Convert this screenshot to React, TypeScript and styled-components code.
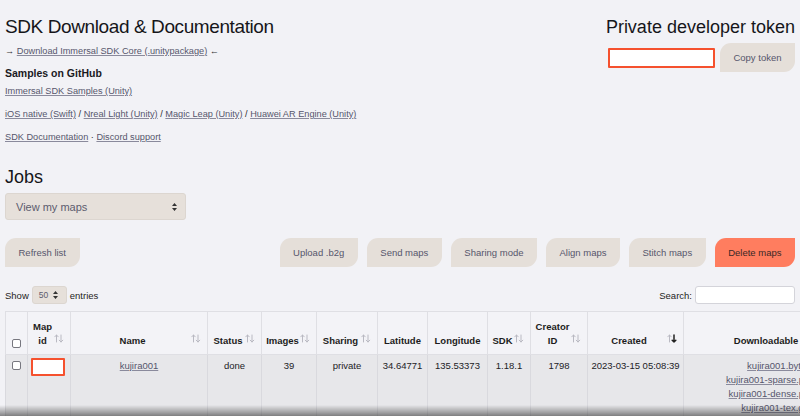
import React from "react";
import styled, { createGlobalStyle } from "styled-components";

const Global = createGlobalStyle`
  html, body { margin: 0; padding: 0; overflow: hidden; background: #f2f2f6; }
  body { font-family: "Liberation Sans", Arial, Helvetica, sans-serif; color: #1e1e22; }
  * { box-sizing: border-box; }
`;

const Page = styled.div`
  padding: 16px 5px 0 5px;
  width: 800px;
  position: relative;
`;

const Top = styled.div`
  display: flex;
  justify-content: space-between;
  align-items: flex-start;
`;

const LeftCol = styled.div`
  display: flex;
  flex-direction: column;
`;

const RightCol = styled.div`
  display: flex;
  flex-direction: column;
  align-items: flex-end;
`;

const Title = styled.h1<{ $size?: number }>`
  margin: 0;
  font-weight: 400;
  font-size: ${(p) => p.$size ?? 19}px;
  line-height: 22px;
  letter-spacing: ${(p) => (p.$size ? 0 : -0.4)}px;
  color: #16161a;
`;

const Line = styled.div<{ $mt: number }>`
  margin-top: ${(p) => p.$mt}px;
  height: 14px;
  font-size: 9.2px;
  line-height: 14px;
  color: #2a2a30;
`;

const Arrow = styled.span`
  font-weight: 700;
  color: #333;
`;

const SubHead = styled.h2`
  margin: 7px 0 0 0;
  font-size: 10.5px;
  line-height: 16px;
  font-weight: 700;
  color: #1a1a1e;
`;

const A = styled.a`
  color: #56566c;
  text-decoration: underline;
  text-decoration-color: #8a8a9c;
  cursor: pointer;
`;

const TokenRow = styled.div`
  display: flex;
  align-items: center;
  gap: 5px;
  margin-top: 5px;
`;

const TokenInput = styled.div`
  width: 107px;
  height: 20px;
  background: #fff;
  border: 2px solid #f5512e;
  border-radius: 1px;
`;

const Button = styled.button<{ $danger?: boolean }>`
  height: 29px;
  padding: 0 13.5px;
  border: none;
  border-radius: 11px 0 11px 0;
  background: ${(p) => (p.$danger ? "#ff7d5f" : "#e5dfd9")};
  color: ${(p) => (p.$danger ? "#3a2826" : "#56566c")};
  font-family: inherit;
  font-size: 9.5px;
  cursor: pointer;
  white-space: nowrap;
`;

const JobsTitle = styled(Title)`
  margin-top: 22px;
`;

const Select = styled.div<{ $w: number; $h: number; $fs: number; $pl: number }>`
  width: ${(p) => p.$w}px;
  height: ${(p) => p.$h}px;
  background: #e6e0da;
  border: 1px solid #dcd6d0;
  border-radius: 3px;
  display: flex;
  align-items: center;
  justify-content: space-between;
  padding: 0 8px 0 ${(p) => p.$pl}px;
  font-size: ${(p) => p.$fs}px;
  color: #5c5c6e;
`;

const JobsSelect = styled(Select)`
  margin-top: 5px;
`;

const ButtonRow = styled.div`
  display: flex;
  align-items: center;
  margin-top: 18px;
`;

const ButtonGroup = styled.div`
  display: flex;
  gap: 9px;
  margin-left: auto;
`;

const Controls = styled.div`
  display: flex;
  align-items: center;
  justify-content: space-between;
  margin-top: 19px;
  font-size: 9.5px;
  color: #1e1e22;
`;

const Inline = styled.div`
  display: flex;
  align-items: center;
  gap: 3px;
`;

const SearchInput = styled.div`
  width: 100px;
  height: 18px;
  background: #fff;
  border: 1px solid #d4d4da;
  border-radius: 3px;
`;

const Table = styled.table`
  margin-top: 7px;
  border-collapse: collapse;
  table-layout: fixed;
  width: 810px;
  font-size: 9.5px;
`;

const Th = styled.th<{ $sortable?: boolean; $pl?: number }>`
  position: relative;
  border: 1px solid #dfdfe4;
  background: #f3f3f7;
  vertical-align: bottom;
  padding: 8px ${(p) => (p.$sortable ? 16 : 3)}px 6px ${(p) => p.$pl ?? 3}px;
  line-height: 14px;
  font-weight: 700;
  color: #1c1c20;
  text-align: center;
  white-space: nowrap;
`;

const Td = styled.td<{ $align?: string }>`
  border: 1px solid #d9d9de;
  background: #e7e7ea;
  vertical-align: top;
  padding: 4px 2px 40px 2px;
  line-height: 14px;
  color: #222226;
  white-space: nowrap;
  text-align: ${(p) => p.$align ?? "center"};
`;

const SortWrap = styled.span`
  position: absolute;
  right: 6px;
  bottom: 11px;
  display: flex;
`;

const Check = styled.span`
  display: inline-block;
  width: 9px;
  height: 9px;
  border: 1px solid #77777f;
  border-radius: 2px;
  background: #fff;
`;

const CheckCell = styled.div<{ $top: number }>`
  display: flex;
  justify-content: center;
  padding-top: ${(p) => p.$top}px;
`;

const IdInput = styled.div`
  width: 34px;
  height: 18px;
  background: #fff;
  border: 2px solid #f5512e;
  border-radius: 1px;
  margin: -1px 0 0 1px;
`;

const LinkList = styled.div`
  display: flex;
  flex-direction: column;
  align-items: flex-end;
  padding-right: 2px;
`;

const BottomShade = styled.div`
  position: fixed;
  left: 0;
  right: 0;
  bottom: 0;
  height: 11px;
  background: linear-gradient(to bottom, rgba(0,0,0,0), rgba(40,40,40,0.55));
  pointer-events: none;
`;

const SortIcon = ({ active }: { active?: boolean }) => (
  <svg width="10" height="9" viewBox="0 0 10 9">
    <g fill="none" strokeLinecap="round" strokeLinejoin="round">
      <path d="M2.5 8V1M0.8 2.8L2.5 1L4.2 2.8" stroke="#b9b9c2" strokeWidth="1" />
      <path
        d="M7 1V8M5.2 6.2L7 8L8.8 6.2"
        stroke={active ? "#222" : "#b9b9c2"}
        strokeWidth={active ? 1.5 : 1}
      />
    </g>
  </svg>
);

const UpDown = () => (
  <svg width="5" height="8" viewBox="0 0 5 8">
    <path d="M2.5 0L5 3H0Z M2.5 8L0 5H5Z" fill="#333" />
  </svg>
);

type Col = { label: React.ReactNode; w: number; sort?: boolean; active?: boolean; pl?: number };

const cols: Col[] = [
  { label: "", w: 22 },
  { label: <>Map<br />id</>, w: 43, sort: true },
  { label: "Name", w: 137, sort: true },
  { label: "Status", w: 54, sort: true },
  { label: "Images", w: 55, sort: true },
  { label: "Sharing", w: 61, sort: true },
  { label: "Latitude", w: 50 },
  { label: "Longitude", w: 60 },
  { label: "SDK", w: 43, sort: true },
  { label: <>Creator<br />ID</>, w: 57, sort: true },
  { label: "Created", w: 96, sort: true, active: true },
  { label: "Downloadable", w: 132, pl: 36 },
];

const files = [
  "kujira001.bytes",
  "kujira001-sparse.ply",
  "kujira001-dense.ply",
  "kujira001-tex.glb",
  "kujira001-tex.obj",
];

export default function App() {
  return (
    <>
      <Global />
      <Page>
        <Top>
          <LeftCol>
            <Title>SDK Download &amp; Documentation</Title>
            <Line $mt={6}>
              <Arrow>→</Arrow> <A>Download Immersal SDK Core (.unitypackage)</A> <Arrow>←</Arrow>
            </Line>
            <SubHead>Samples on GitHub</SubHead>
            <Line $mt={3}>
              <A>Immersal SDK Samples (Unity)</A>
            </Line>
            <Line $mt={9}>
              <A>iOS native (Swift)</A> / <A>Nreal Light (Unity)</A> /{" "}
              <A>Magic Leap (Unity)</A> / <A>Huawei AR Engine (Unity)</A>
            </Line>
            <Line $mt={9}>
              <A>SDK Documentation</A> · <A>Discord support</A>
            </Line>
          </LeftCol>
          <RightCol>
            <Title $size={18}>Private developer token</Title>
            <TokenRow>
              <TokenInput />
              <Button>Copy token</Button>
            </TokenRow>
          </RightCol>
        </Top>

        <JobsTitle $size={18}>Jobs</JobsTitle>
        <JobsSelect $w={181} $h={27} $fs={11} $pl={10}>
          <span>View my maps</span>
          <UpDown />
        </JobsSelect>

        <ButtonRow>
          <Button>Refresh list</Button>
          <ButtonGroup>
            <Button>Upload .b2g</Button>
            <Button>Send maps</Button>
            <Button>Sharing mode</Button>
            <Button>Align maps</Button>
            <Button>Stitch maps</Button>
            <Button $danger>Delete maps</Button>
          </ButtonGroup>
        </ButtonRow>

        <Controls>
          <Inline>
            <span>Show</span>
            <Select $w={35} $h={18} $fs={8.5} $pl={6}>
              <span>50</span>
              <UpDown />
            </Select>
            <span>entries</span>
          </Inline>
          <Inline>
            <span>Search:</span>
            <SearchInput />
          </Inline>
        </Controls>

        <Table>
          <colgroup>
            {cols.map((c, i) => (
              <col key={i} style={{ width: c.w }} />
            ))}
          </colgroup>
          <thead>
            <tr>
              {cols.map((c, i) => (
                <Th key={i} $sortable={c.sort} $pl={c.pl}>
                  {i === 0 ? (
                    <CheckCell $top={0}>
                      <Check />
                    </CheckCell>
                  ) : (
                    c.label
                  )}
                  {c.sort && (
                    <SortWrap>
                      <SortIcon active={c.active} />
                    </SortWrap>
                  )}
                </Th>
              ))}
            </tr>
          </thead>
          <tbody>
            <tr>
              <Td>
                <CheckCell $top={2}>
                  <Check />
                </CheckCell>
              </Td>
              <Td $align="left">
                <IdInput />
              </Td>
              <Td>
                <A>kujira001</A>
              </Td>
              <Td>done</Td>
              <Td>39</Td>
              <Td>private</Td>
              <Td>34.64771</Td>
              <Td>135.53373</Td>
              <Td>1.18.1</Td>
              <Td>1798</Td>
              <Td>2023-03-15 05:08:39</Td>
              <Td $align="right">
                <LinkList>
                  {files.map((f) => (
                    <A key={f}>{f}</A>
                  ))}
                </LinkList>
              </Td>
            </tr>
          </tbody>
        </Table>
        <BottomShade />
      </Page>
    </>
  );
}
